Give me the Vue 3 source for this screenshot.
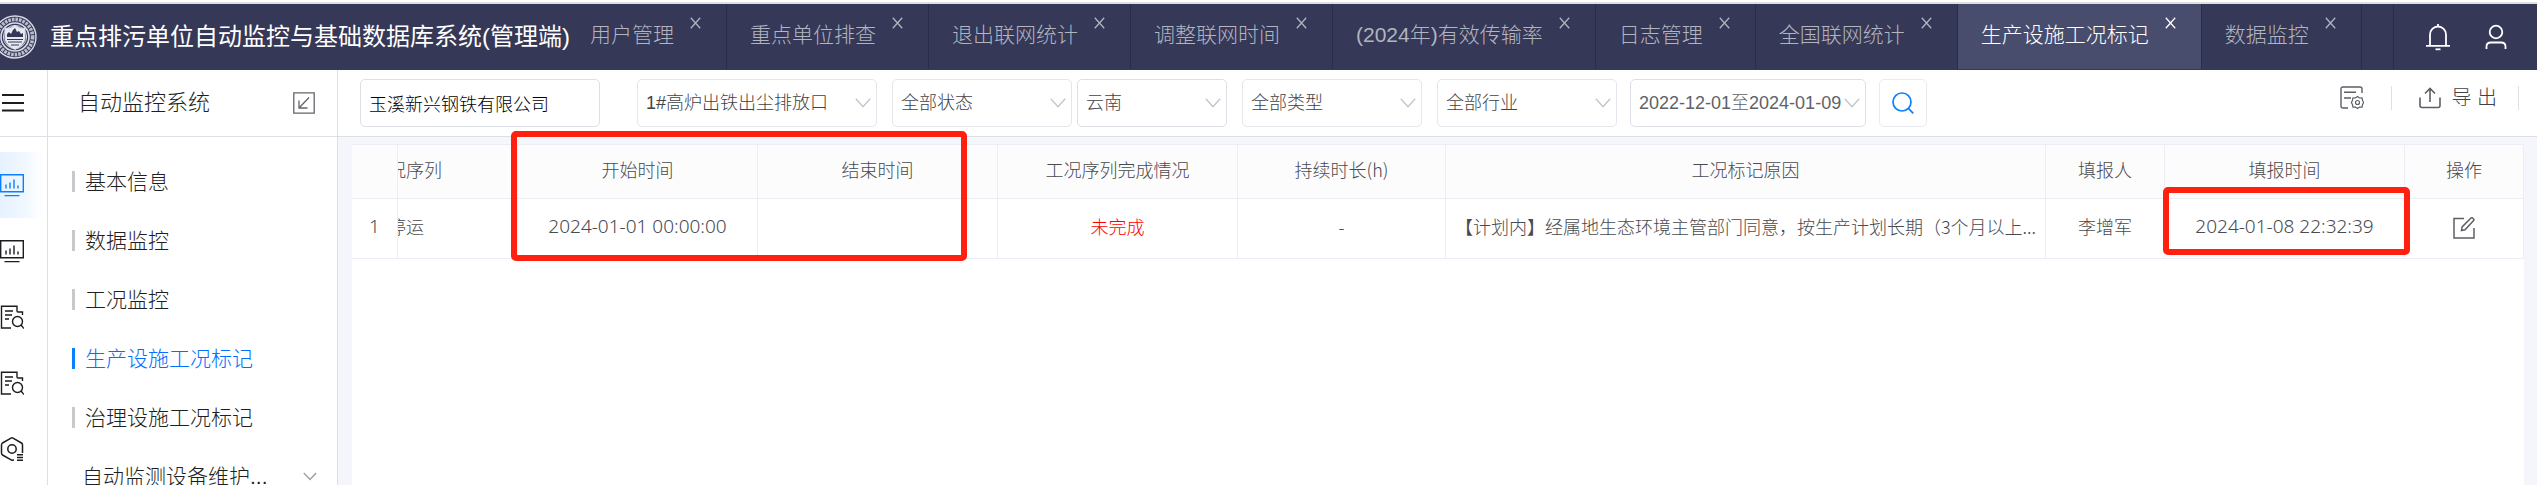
<script setup>
import { ref } from 'vue'

const tabs = ['用户管理', '重点单位排查', '退出联网统计', '调整联网时间', '(2024年)有效传输率', '日志管理', '全国联网统计', '生产设施工况标记', '数据监控']
const activeTab = ref('生产设施工况标记')

const menus = ['基本信息', '数据监控', '工况监控', '生产设施工况标记', '治理设施工况标记']
const activeMenu = ref('生产设施工况标记')

const rail = [
  { name: '自动监控', icon: 'chart' },
  { name: '数据统计', icon: 'chart' },
  { name: '报告查询', icon: 'search' },
  { name: '记录查询', icon: 'search' },
  { name: '系统设置', icon: 'setting' }
]
const activeRail = ref(0)

const company = ref('玉溪新兴钢铁有限公司')
const filters = [
  { label: '排放口', value: '1#高炉出铁出尘排放口', cls: 'outlet' },
  { label: '状态', value: '全部状态', cls: 'status' },
  { label: '地区', value: '云南', cls: 'region' },
  { label: '类型', value: '全部类型', cls: 'type' },
  { label: '行业', value: '全部行业', cls: 'trade' },
  { label: '日期', value: '2022-12-01至2024-01-09', cls: 'date' }
]

const rows = [
  {
    name: '停运',
    start: '2024-01-01 00:00:00',
    end: '',
    status: '未完成',
    hours: '-',
    reason: '【计划内】经属地生态环境主管部门同意，按生产计划长期（3个月以上...',
    user: '李增军',
    time: '2024-01-08 22:32:39'
  }
]
</script>

<template>
  <div class="page">
    <header class="header">
      <div class="brand">
        <svg class="logo" width="44" height="44" viewBox="0 0 44 44" fill="none" stroke="#d9dbe6">
          <circle cx="22" cy="22" r="21" stroke-width="1.4" />
          <circle cx="22" cy="22" r="17.6" stroke-width="3.6" stroke-dasharray="2.6 1" stroke="#b9bccd" />
          <circle cx="22" cy="22" r="14" stroke-width="1.6" />
          <circle cx="22" cy="22" r="11.6" stroke-width="1" />
          <path d="M12 13.500q5 .5 10-3q5 3.500 10 3v10q-1 7-10 11q-9-4-10-11z" fill="#e9eaf1" />
          <path d="M14 22v-3l2-2l2 2l2-4l2-2l2 4l2-1l2 3l2-1v4z" fill="#353857" stroke="none" />
          <path d="M14 24.500h16M15 27h14M18 30h8" stroke="#353857" stroke-width="1" />
        </svg>
        <h1>重点排污单位自动监控与基础数据库系统(管理端)</h1>
      </div>
      <nav class="tabs">
        <div v-for="tab in tabs" :key="tab" class="tab" :class="{ active: tab === activeTab }">
          <a href="#" @click.prevent="activeTab = tab">{{ tab }}</a>
          <button :aria-label="'关闭' + tab">
            <svg width="11" height="12" viewBox="0 0 11 12" fill="none" stroke="currentColor" stroke-width="1.3">
              <path d="M.8 .8l9.400 10.400M10.200 .8L.8 11.200" />
            </svg>
          </button>
        </div>
      </nav>
      <div class="account">
        <button aria-label="消息">
          <svg width="24" height="30" viewBox="0 0 24 30" fill="none" stroke="#fff" stroke-width="1.8">
            <path d="M4 23.500V12.500a8 8 0 0 1 16 0v11M0 23.900h24M12 2v2.500" />
            <path d="M9.500 27.300h5" />
          </svg>
        </button>
        <button aria-label="用户">
          <svg width="22" height="30" viewBox="0 0 22 30" fill="none" stroke="#fff" stroke-width="1.8">
            <circle cx="11" cy="10" r="6.300" />
            <path d="M1.500 27v-2.500q0-4 4.500-4h10q4.500 0 4.500 4V27" />
          </svg>
        </button>
      </div>
    </header>

    <div class="body">
      <aside class="rail">
        <button class="burger" aria-label="展开菜单">
          <svg width="24" height="20" viewBox="0 0 24 20" stroke="#1c1d21" stroke-width="2">
            <path d="M2 2h22M2 10h22M2 17.500h22" />
          </svg>
        </button>
        <button
          v-for="(item, index) in rail"
          :key="index"
          class="rail-item"
          :class="{ active: index === activeRail }"
          :aria-label="item.name"
          @click="activeRail = index"
        >
          <svg v-if="item.icon === 'chart'" width="24" height="24" viewBox="0 0 24 24" fill="none" stroke="currentColor" stroke-width="1.4">
            <path d="M.7 1.700h22.600v17H.7zM4.500 22.600h15" />
            <path d="M6 15.500v-4M10 15.500v-6M14 15.500V6.500M18 15.500v-3" />
          </svg>
          <svg v-else-if="item.icon === 'search'" width="24" height="24" viewBox="0 0 24 24" fill="none" stroke="currentColor" stroke-width="1.4">
            <path d="M11 23H1.500V1.200H17V6q0 1 1 1h4.500v3M5 6h8M5 10h7M5 14h4" />
            <circle cx="17.500" cy="16.500" r="5" />
            <path d="M21 20l3 3.500" />
          </svg>
          <svg v-else width="24" height="24" viewBox="0 0 24 24" fill="none" stroke="currentColor" stroke-width="1.500">
            <path d="M14 23l-2 .3L2.500 18Q1.500 17.400 1.500 16V8Q1.500 6.700 2.500 6L11 1.100q1-.5 2 0L21.500 6q1 .6 1 2v8" />
            <circle cx="12" cy="12" r="4.200" />
            <path d="M17 17.800h6M17 20.500h6M17 23.200h6" />
          </svg>
        </button>
      </aside>

      <aside class="side">
        <div class="side-head">
          <h2>自动监控系统</h2>
          <button aria-label="收起">
            <svg width="22" height="22" viewBox="0 0 22 22" fill="none" stroke="#62656c" stroke-width="1.300">
              <path d="M.8 .8h20.400v20.400H.8zM16 5.500L6 16M6 8.500V16h8.500" />
            </svg>
          </button>
        </div>
        <ul>
          <li v-for="menu in menus" :key="menu" :class="{ active: menu === activeMenu }">
            <a href="#" @click.prevent="activeMenu = menu">{{ menu }}</a>
          </li>
          <li class="parent">
            <a href="#">自动监测设备维护...</a>
            <svg width="14" height="9" viewBox="0 0 14 9" fill="none" stroke="#9a9da5" stroke-width="1.300">
              <path d="M.8 1l6.200 6.500L13.200 1" />
            </svg>
          </li>
        </ul>
      </aside>

      <main class="main">
        <form class="toolbar" @submit.prevent>
          <input v-model="company" class="company" type="text" aria-label="企业名称">
          <div v-for="f in filters" :key="f.cls" class="field" :class="f.cls">
            <select :aria-label="f.label">
              <option>{{ f.value }}</option>
            </select>
            <svg width="16" height="10" viewBox="0 0 16 10" fill="none" stroke="#c0c4cc" stroke-width="1.300">
              <path d="M.8 .8L8 8.800L15.200 .8" />
            </svg>
          </div>
          <button class="search" type="submit" aria-label="查询">
            <svg width="22" height="22" viewBox="0 0 22 22" fill="none" stroke="#0b80ff" stroke-width="1.700">
              <circle cx="10" cy="10" r="9" />
              <path d="M16.300 16.300l5 5" />
            </svg>
          </button>
          <div class="tools">
            <button type="button" aria-label="列设置">
              <svg width="24" height="24" viewBox="0 0 24 24" fill="none" stroke="#5c5f66" stroke-width="1.400">
                <path d="M8 22H3q-2 0-2-2V3q0-2 2-2h17q2 0 2 2v4M4 6.200h12M4 12h7" />
                <path d="M17.500 10.500l2 1.500 2.500-.2.6 2.700 1 2-1 2-.6 2.700-2.500-.2-2 1.500-2-1.500-2.500.2-.6-2.700-1-2 1-2 .6-2.700 2.500.2z" stroke-width="1.200" />
                <circle cx="17.500" cy="16.500" r="2" stroke-width="1.200" />
              </svg>
            </button>
            <span class="line"></span>
            <button type="button" class="export">
              <svg width="22" height="22" viewBox="0 0 22 22" fill="none" stroke="#5c5f66" stroke-width="1.600">
                <path d="M1 10.500v8q0 2 2 2h16q2 0 2-2v-8M11 15V1.500M6 6.500l5-5 5 5" />
              </svg>
              导 出
            </button>
            <span class="line"></span>
          </div>
        </form>

        <div class="content">
          <div class="sheet">
            <table>
              <colgroup>
                <col class="c-index">
                <col class="c-name">
                <col class="c-mid">
                <col class="c-mid">
                <col class="c-mid">
                <col class="c-hours">
                <col>
                <col class="c-small">
                <col class="c-mid">
                <col class="c-small">
              </colgroup>
              <thead>
                <tr>
                  <th></th>
                  <th class="scrolled"><div>工况序列</div></th>
                  <th class="anchor">开始时间<span class="mark mark-range"></span></th>
                  <th>结束时间</th>
                  <th>工况序列完成情况</th>
                  <th>持续时长(h)</th>
                  <th>工况标记原因</th>
                  <th>填报人</th>
                  <th>填报时间</th>
                  <th>操作</th>
                </tr>
              </thead>
              <tbody>
                <tr v-for="(row, index) in rows" :key="index">
                  <td class="num">{{ index + 1 }}</td>
                  <td class="scrolled"><div>{{ row.name }}</div></td>
                  <td class="num">{{ row.start }}</td>
                  <td class="num">{{ row.end }}</td>
                  <td class="undone">{{ row.status }}</td>
                  <td>{{ row.hours }}</td>
                  <td class="reason">{{ row.reason }}</td>
                  <td>{{ row.user }}</td>
                  <td class="num anchor">{{ row.time }}<span class="mark mark-time"></span></td>
                  <td>
                    <button class="edit" aria-label="编辑">
                      <svg width="22" height="22" viewBox="0 0 22 22" fill="none" stroke="#5c5f66" stroke-width="1.500">
                        <path d="M11 1.500H1v19.500h20V11" />
                        <path d="M8.500 13.500l.6-3.600L18 1q.8-.6 1.600 0l1 1q.6.8 0 1.600l-8.600 9.200z" />
                      </svg>
                    </button>
                  </td>
                </tr>
              </tbody>
            </table>
          </div>
        </div>
      </main>
    </div>
  </div>
</template>

<style>
body {
  margin: 0;
}
</style>

<style scoped>
.page {
  display: flex;
  flex-direction: column;
  height: 100vh;
  overflow: hidden;
  box-sizing: border-box;
  padding-top: 2px;
  background: #fff;
  font-family: "Liberation Sans", "Noto Sans CJK SC", sans-serif;
  font-weight: 300;
  color: #1e1f22;
}

.page * {
  box-sizing: border-box;
}

button {
  padding: 0;
  border: none;
  background: none;
  font: inherit;
  color: inherit;
  cursor: pointer;
}

a {
  color: inherit;
  text-decoration: none;
}

svg {
  display: block;
  flex: none;
}

h1,
h2,
ul {
  margin: 0;
  padding: 0;
  font-weight: inherit;
  list-style: none;
}

.header {
  display: flex;
  flex: none;
  height: 68px;
  padding-bottom: 1px;
  border-top: 2px solid #dfe0dc;
  background: #353857;
}

.brand {
  display: flex;
  align-items: center;
  gap: 13px;
  flex: none;
  width: 567px;
}

.logo {
  margin-left: -7px;
}

.brand h1 {
  font-size: 24px;
  font-weight: 400;
  line-height: 36px;
  white-space: nowrap;
  color: #fff;
}

.tabs {
  display: flex;
  flex: 1;
  min-width: 0;
  overflow: hidden;
}

.tab {
  display: flex;
  align-items: center;
  gap: 16px;
  flex: none;
  padding: 0 25px 0 23px;
  border-right: 1px solid #2a2d4a;
  font-size: 21px;
  line-height: 62px;
  color: #b2b5c0;
}

.tab a {
  align-self: flex-start;
  white-space: nowrap;
}

.tab button {
  align-self: flex-start;
  margin-top: 13px;
}

.tab.active {
  background: #484d6e;
  color: #fff;
}

.account {
  display: flex;
  align-items: center;
  gap: 35px;
  flex: none;
  width: 144px;
  padding-left: 32px;
  border-left: 1px solid #2a2d4a;
}

.body {
  display: flex;
  flex: 1;
  min-height: 0;
}

.rail {
  display: flex;
  flex-direction: column;
  flex: none;
  width: 48px;
  border-right: 1px solid #dcdfe6;
}

.burger {
  flex: none;
  height: 67px;
  margin-bottom: 15px;
  border-bottom: 1px solid #dcdfe6;
}

.rail-item {
  display: flex;
  align-items: center;
  flex: none;
  height: 66px;
  color: #1c1d21;
}

.rail-item.active {
  background: linear-gradient(90deg, #e6f2ff, #f0f7ff 50%, #fff 90%);
  color: #0b80ff;
}

.side {
  flex: none;
  width: 290px;
  border-right: 1px solid #dcdfe6;
}

.side-head {
  display: flex;
  align-items: center;
  justify-content: space-between;
  height: 67px;
  padding: 0 22px 0 30px;
  border-bottom: 1px solid #dcdfe6;
}

.side-head h2 {
  font-size: 22px;
  line-height: 32px;
}

.side ul {
  padding-top: 15px;
}

.side li {
  display: flex;
  align-items: center;
  height: 59px;
  padding: 0 20px 0 24px;
  font-size: 21px;
  line-height: 21px;
}

.side li a {
  padding-left: 10px;
  border-left: 3px solid #c8c9cc;
}

.side li.active a {
  border-color: #0b80ff;
  color: #0070ff;
}

.side li.parent {
  justify-content: space-between;
}

.side li.parent a {
  border-left: none;
}

.main {
  display: flex;
  flex-direction: column;
  flex: 1;
  min-width: 0;
}

.toolbar {
  display: flex;
  align-items: center;
  flex: none;
  height: 67px;
  padding-left: 22px;
  border-bottom: 1px solid #dcdfe6;
}

.company,
.field select {
  height: 48px;
  padding: 0 8px;
  border: 1px solid #e4e6ec;
  border-radius: 5px;
  background: #fff;
  font: inherit;
  font-size: 18px;
  color: #404246;
}

.company {
  width: 240px;
  margin-right: 37px;
  border-color: #dcdfe6;
  color: #000;
}

.field {
  display: flex;
  align-items: center;
  flex: none;
  width: 180px;
  margin-right: 15px;
}

.field select {
  width: 100%;
  appearance: none;
}

.field svg {
  margin-left: -22px;
  pointer-events: none;
}

.field.outlet {
  width: 240px;
}

.field.status {
  margin-right: 5px;
}

.field.region {
  width: 150px;
}

.field.trade {
  margin-right: 13px;
}

.field.date {
  width: 236px;
  margin-right: 13px;
}

.field.region select,
.field.date select {
  border-color: #dcdfe6;
}

.field.date select {
  color: #606266;
}

.search {
  display: flex;
  align-items: center;
  justify-content: center;
  flex: none;
  width: 48px;
  height: 48px;
  border: 1px solid #e9ebf0;
  border-radius: 5px;
}

.tools {
  display: flex;
  align-items: center;
  gap: 27px;
  margin-left: auto;
  padding: 0 18px 10px 0;
}

.line {
  width: 1px;
  height: 24px;
  background: #dcdfe6;
}

.export {
  display: flex;
  align-items: center;
  gap: 10px;
  margin-right: -6px;
  font-size: 20px;
  line-height: 24px;
  color: #404246;
}

.content {
  display: flex;
  flex: 1;
  padding: 7px 13px 0 14px;
  background: #f5f6fc;
}

.sheet {
  flex: 1;
  min-width: 0;
  background: #fff;
}

table {
  width: 100%;
  table-layout: fixed;
  border-collapse: separate;
  border-spacing: 0;
  border-top: 1px solid #ebeef5;
  font-family: "Noto Sans CJK SC", sans-serif;
  font-size: 18px;
  line-height: 24px;
  color: #484a4e;
}

.c-index {
  width: 46px;
}

.c-name {
  width: 120px;
}

.c-mid {
  width: 240px;
}

.c-hours {
  width: 208px;
}

.c-small {
  width: 119px;
}

th,
td {
  height: 60px;
  padding: 0 0 6px;
  border-right: 1px solid #ebeef5;
  border-bottom: 1px solid #ebeef5;
  font-weight: inherit;
  text-align: center;
  white-space: nowrap;
}

th {
  height: 54px;
  background: #fcfcfd;
}

.scrolled {
  overflow: hidden;
}

.scrolled div {
  width: 224px;
  margin-left: -104px;
}

.num {
  font-family: "Noto Sans", "Noto Sans CJK SC", sans-serif;
  font-size: 19px;
}

.undone {
  color: #f00;
}

.reason {
  padding: 0 5px 6px;
}

.edit {
  vertical-align: middle;
}

.anchor {
  position: relative;
}

.mark {
  position: absolute;
  z-index: 2;
  border: 6px solid #ff2010;
  border-radius: 5px;
  pointer-events: none;
}

.mark-range {
  top: -14px;
  left: -7px;
  width: 456px;
  height: 130px;
}

.mark-time {
  top: -12px;
  right: -6px;
  left: -2px;
  height: 68px;
}
</style>
